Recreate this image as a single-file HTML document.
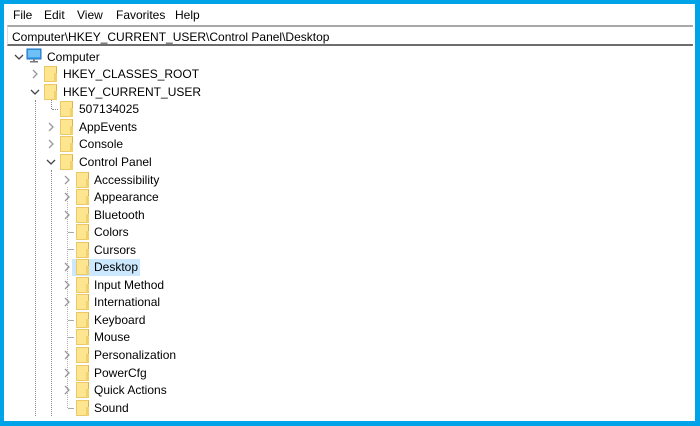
<!DOCTYPE html>
<html><head><meta charset="utf-8"><style>
*{margin:0;padding:0;box-sizing:border-box}
body{width:700px;height:426px;background:#00a2e8;position:relative;overflow:hidden;font-family:"Liberation Sans",sans-serif;font-size:12px;color:#000}
#win{position:absolute;left:4px;top:4px;width:691px;height:417px;background:#fff}
.menu{position:absolute;top:8px;font-size:12px}
#addr{position:absolute;left:7px;top:25px;width:686px;height:21px;border-top:2px solid #a8a8a8;border-bottom:2px solid #6d6d6d;border-left:1px solid #ddd;background:#fff;padding:3px 0 0 4px;font-size:12px;line-height:14px;white-space:nowrap}
.t{position:absolute;font-size:12px;line-height:16px;white-space:nowrap}
.f{position:absolute;width:13px;height:16px;background:#fde68f;border:1px solid #ecc866;border-right-color:#dcb24a}
.f:after{content:"";position:absolute;right:-1px;bottom:-1px;width:3px;height:9px;background:#f3d068}
.vl{position:absolute;width:0;border-left:1px dotted #8a8a8a}
.hl{position:absolute;height:0;border-top:1px dotted #8a8a8a}
svg{display:block}
</style></head><body>
<div id="win"></div>
<div class="menu" style="left:13px">File</div>
<div class="menu" style="left:44px">Edit</div>
<div class="menu" style="left:77px">View</div>
<div class="menu" style="left:116px">Favorites</div>
<div class="menu" style="left:175px">Help</div>
<div id="addr">Computer\HKEY_CURRENT_USER\Control Panel\Desktop</div>

<div style="position:absolute;left:72px;top:259px;width:68px;height:17px;background:#cce8ff"></div>

<div class="vl" style="left:35px;top:100px;height:316px"></div>
<div class="vl" style="left:51px;top:100px;height:9px"></div>
<div class="hl" style="left:52px;top:109px;width:6px"></div>
<div class="vl" style="left:51px;top:170px;height:246px"></div>
<div class="vl" style="left:67px;top:187px;height:221px;border-left-color:#b0b0b0"></div>
<div class="hl" style="left:68px;top:232px;width:6px;border-top-style:solid;border-color:#aaa"></div>
<div class="hl" style="left:68px;top:249px;width:6px;border-top-style:solid;border-color:#aaa"></div>
<div class="hl" style="left:68px;top:320px;width:6px;border-top-style:solid;border-color:#aaa"></div>
<div class="hl" style="left:68px;top:337px;width:6px;border-top-style:solid;border-color:#aaa"></div>
<div class="hl" style="left:68px;top:408px;width:6px;border-top-style:solid;border-color:#aaa"></div>

<svg style="position:absolute;left:14px;top:52px" width="10" height="10"><path d="M1 3 L5 7 L9 3" fill="none" stroke="#444" stroke-width="1.3"/></svg>
<svg style="position:absolute;left:26px;top:48px" width="16" height="16"><rect x="1" y="1" width="14" height="10" fill="#3ea2ea" stroke="#1f72c2"/><rect x="2" y="2" width="12" height="7" fill="#6fc1f5"/><rect x="7" y="11" width="2" height="2" fill="#888"/><rect x="4" y="13" width="8" height="1.5" fill="#777"/></svg>
<div class="t" style="left:47px;top:49px">Computer</div>

<svg style="position:absolute;left:30px;top:69px" width="10" height="10"><path d="M3 1 L7 5 L3 9" fill="none" stroke="#999" stroke-width="1.3"/></svg>
<div class="f" style="left:44px;top:66px"></div><div class="t" style="left:63px;top:66px">HKEY_CLASSES_ROOT</div>
<svg style="position:absolute;left:30px;top:87px" width="10" height="10"><path d="M1 3 L5 7 L9 3" fill="none" stroke="#444" stroke-width="1.3"/></svg>
<div class="f" style="left:44px;top:84px"></div><div class="t" style="left:63px;top:84px">HKEY_CURRENT_USER</div>

<div class="f" style="left:60px;top:101px"></div><div class="t" style="left:79px;top:101px">507134025</div>
<svg style="position:absolute;left:46px;top:122px" width="10" height="10"><path d="M3 1 L7 5 L3 9" fill="none" stroke="#999" stroke-width="1.3"/></svg>
<div class="f" style="left:60px;top:119px"></div><div class="t" style="left:79px;top:119px">AppEvents</div>
<svg style="position:absolute;left:46px;top:139px" width="10" height="10"><path d="M3 1 L7 5 L3 9" fill="none" stroke="#999" stroke-width="1.3"/></svg>
<div class="f" style="left:60px;top:136px"></div><div class="t" style="left:79px;top:136px">Console</div>
<svg style="position:absolute;left:46px;top:157px" width="10" height="10"><path d="M1 3 L5 7 L9 3" fill="none" stroke="#444" stroke-width="1.3"/></svg>
<div class="f" style="left:60px;top:154px"></div><div class="t" style="left:79px;top:154px">Control Panel</div>

<div id="l3"></div>
<script>
var items=[["Accessibility",1],["Appearance",1],["Bluetooth",1],["Colors",0],["Cursors",0],["Desktop",1],["Input Method",1],["International",1],["Keyboard",0],["Mouse",0],["Personalization",1],["PowerCfg",1],["Quick Actions",1],["Sound",0]];
var h="";
items.forEach(function(it,i){var y=Math.round(171.5+17.55*i);
if(it[1])h+='<svg style="position:absolute;left:62px;top:'+(y+3)+'px" width="10" height="10"><path d="M3 1 L7 5 L3 9" fill="none" stroke="#999" stroke-width="1.3"/></svg>';
h+='<div class="f" style="left:76px;top:'+y+'px"></div><div class="t" style="left:94px;top:'+y+'px">'+it[0]+'</div>';});
document.getElementById("l3").innerHTML=h;
</script>
</body></html>
